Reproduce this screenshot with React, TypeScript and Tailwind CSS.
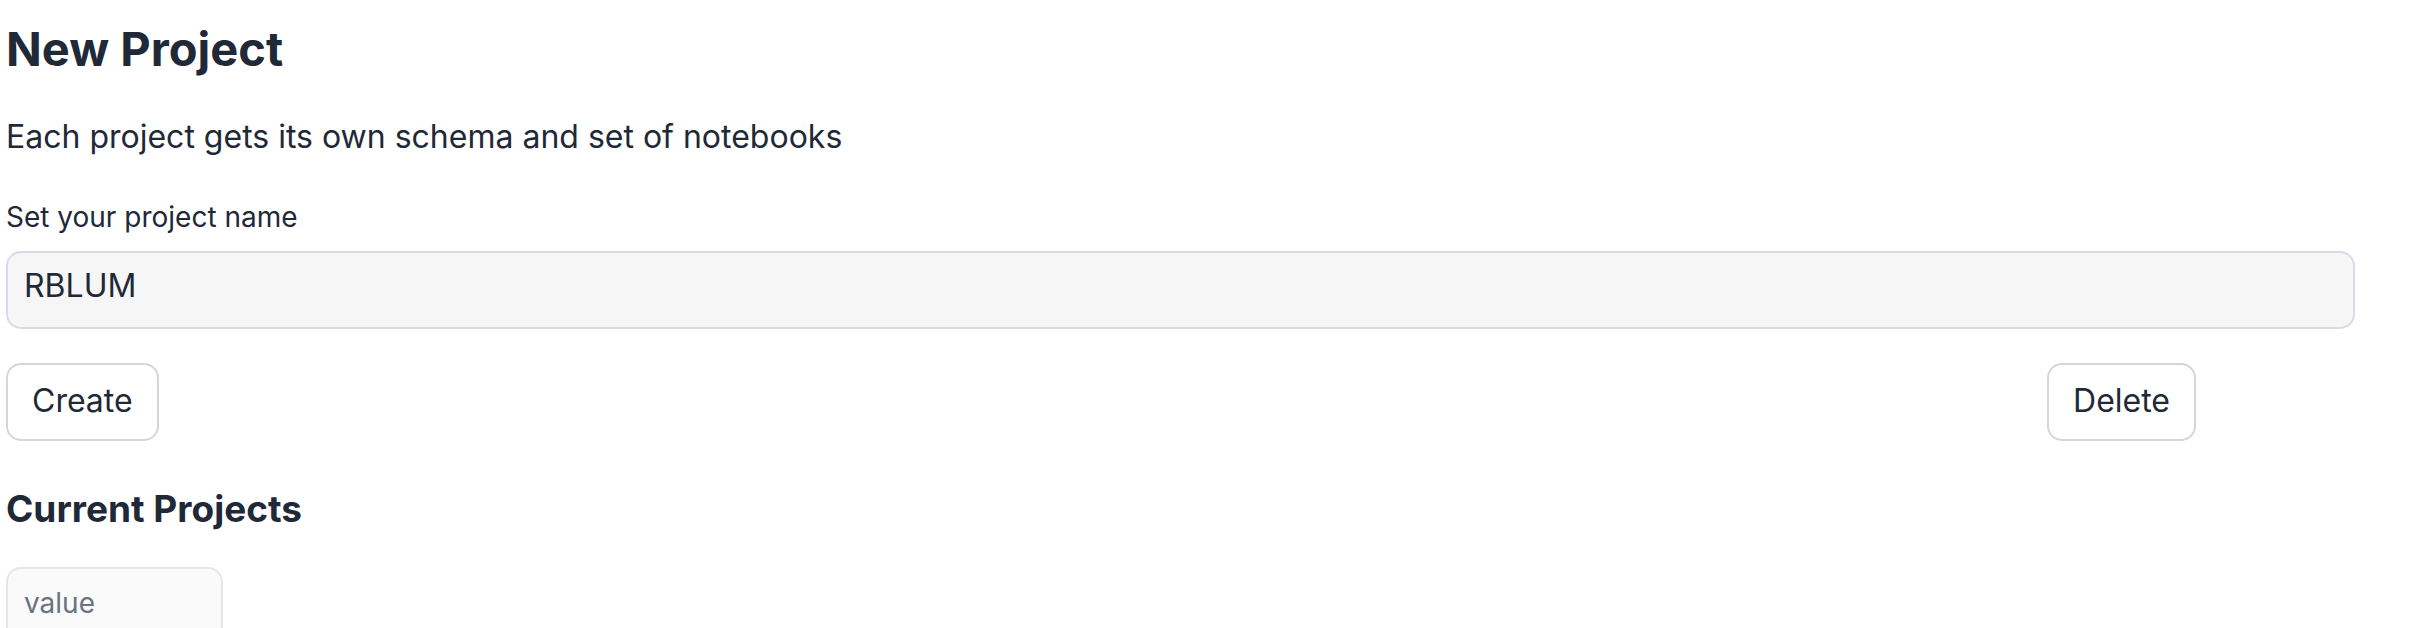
import React from "react";

export default function App() {
  return (
    <div className="min-h-[628px] bg-white px-[6px] font-['Inter',sans-serif] text-[#1f2937] overflow-hidden">
      <h1 className="pt-[25px] text-[47px] font-bold leading-[47px]">New Project</h1>
      <p className="mt-[49px] text-[32px] leading-[32px]">
        Each project gets its own schema and set of notebooks
      </p>
      <label className="mt-[50px] block text-[28px] leading-[28px]">Set your project name</label>
      <div className="mt-[20px] w-[2349px]">
        <input
          defaultValue="RBLUM"
          className="box-border h-[78px] w-full rounded-[15px] border-2 border-[#d9dce8] bg-[#f6f6f7] px-[16px] pb-[9px] font-['Inter',sans-serif] text-[32px] text-[#1f2937] outline-none"
        />
      </div>
      <div className="mt-[34px] flex w-[2190px] justify-between">
        <button className="box-border h-[78px] rounded-[15px] border-2 border-[#d6d6d6] bg-white px-[24px] pb-[2px] font-['Inter',sans-serif] text-[32px] text-[#1f2937]">
          Create
        </button>
        <button className="box-border h-[78px] rounded-[15px] border-2 border-[#d6d6d6] bg-white px-[24px] pb-[2px] font-['Inter',sans-serif] text-[32px] text-[#1f2937]">
          Delete
        </button>
      </div>
      <h2 className="mt-[49px] text-[37px] font-bold leading-[37px]">Current Projects</h2>
      <div className="mt-[40px] box-border h-[90px] w-[217px] rounded-[15px] border-2 border-[#e6e6e6] bg-[#fafafa] px-[16px] pt-[20px] text-[28px] leading-[28px] text-[#6b7280]">
        value
      </div>
    </div>
  );
}
